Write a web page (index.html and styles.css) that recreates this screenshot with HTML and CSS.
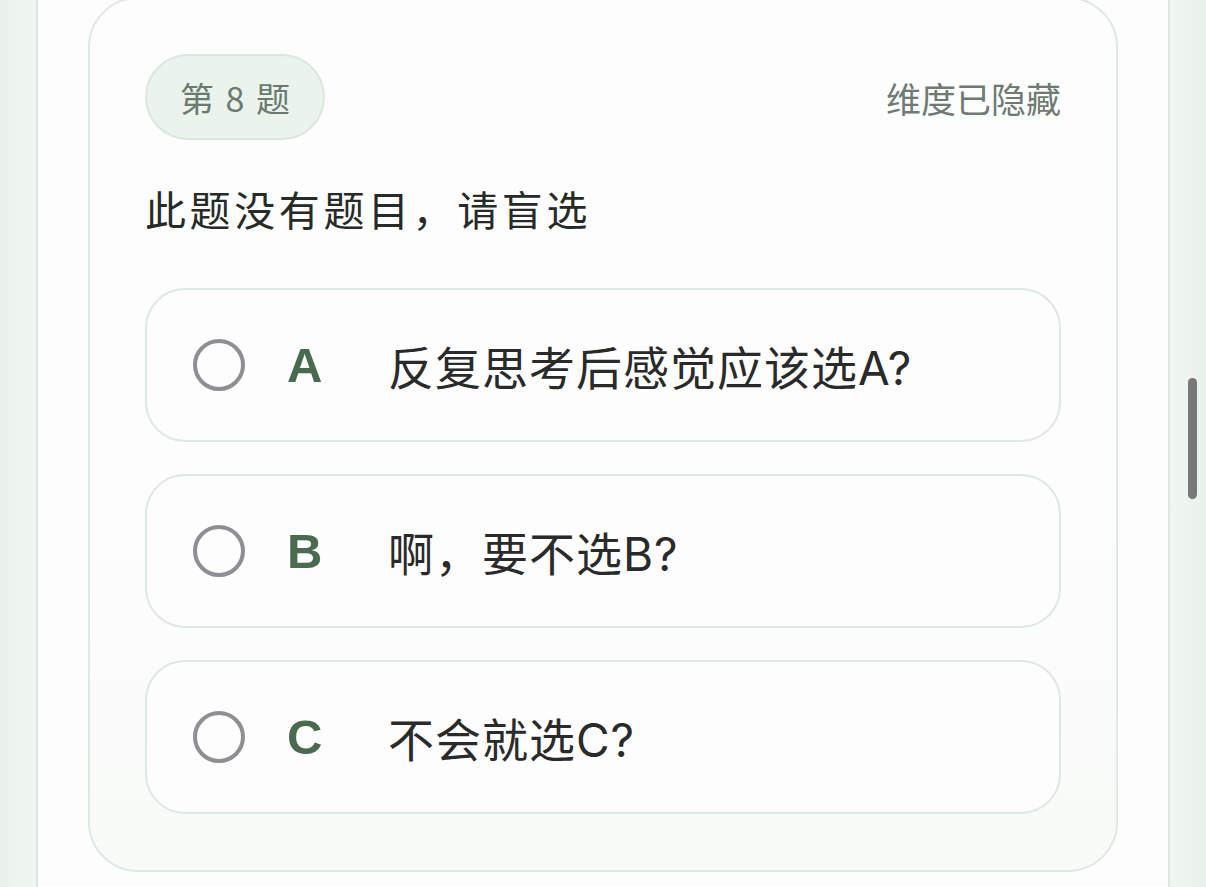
FILE: index.html
```html
<!DOCTYPE html>
<html lang="zh-CN">
<head>
<meta charset="utf-8">
<link rel="stylesheet" href="styles.css">
</head>
<body>
<div class="page">
  <div class="column">
    <div class="card">
      <div class="card-head">
        <span class="badge">第 8 题</span>
        <span class="hint">维度已隐藏</span>
      </div>
      <div class="question">此题没有题目，请盲选</div>
      <div class="options">
        <div class="option">
          <span class="radio"></span>
          <span class="letter">A</span>
          <span class="text">反复思考后感觉应该选A?</span>
        </div>
        <div class="option">
          <span class="radio"></span>
          <span class="letter">B</span>
          <span class="text">啊，要不选B?</span>
        </div>
        <div class="option">
          <span class="radio"></span>
          <span class="letter">C</span>
          <span class="text">不会就选C?</span>
        </div>
      </div>
    </div>
  </div>
  <div class="scrollbar"></div>
</div>
</body>
</html>
```
FILE: styles.css
```css
html, body {
  margin: 0;
  padding: 0;
  height: 100%;
}
body {
  background: linear-gradient(90deg, #eaf1ec 0%, #f1f6f2 3%, #f1f6f2 97%, #eaf1ec 100%);
  font-family: "Inter", "Noto Sans CJK SC", sans-serif;
  overflow: hidden;
}
.page {
  position: relative;
  height: 887px;
  display: flex;
  justify-content: center;
}
.column {
  width: 1134px;
  height: 100%;
  background: #fdfdfd;
  border-left: 2px solid #dce7df;
  border-right: 2px solid #dce7df;
  padding: 0 50px;
  box-sizing: border-box;
}
.card {
  margin-top: -3px;
  border: 2px solid #dfe8e2;
  border-radius: 50px;
  background: linear-gradient(180deg, #fdfdfd 0%, #fcfdfc 60%, #f8faf8 100%);
  padding: 55px 55px 56px;
}
.card-head {
  display: flex;
  justify-content: space-between;
  align-items: center;
}
.badge {
  box-sizing: border-box;
  height: 86px;
  padding: 0 31px 0 33px;
  display: flex;
  align-items: center;
  border-radius: 43px;
  background: #ebf3ed;
  border: 2px solid #dbe7de;
  color: #6a7a6f;
  font-size: 34px;
  letter-spacing: 2px;
  font-family: "Noto Sans CJK SC", sans-serif;
}
.hint {
  color: #6e7a72;
  font-size: 35px;
  font-family: "Noto Sans CJK SC", sans-serif;
}
.question {
  margin-top: 38px;
  font-size: 41px;
  line-height: 60px;
  letter-spacing: 3.6px;
  color: #262b28;
  font-family: "Noto Sans CJK SC", sans-serif;
}
.options {
  margin-top: 50px;
  display: flex;
  flex-direction: column;
  gap: 32px;
}
.option {
  box-sizing: border-box;
  height: 154px;
  border: 2px solid #dfe8e2;
  border-radius: 40px;
  background: #fdfdfd;
  display: flex;
  align-items: center;
  padding-left: 46px;
}
.radio {
  box-sizing: border-box;
  width: 52px;
  height: 52px;
  border-radius: 50%;
  border: 4px solid #8e8e93;
  flex: none;
}
.letter {
  width: 101px;
  margin-left: 42px;
  font-size: 49px;
  font-weight: 700;
  color: #4a6a50;
  font-family: "Liberation Sans", sans-serif;
}
.text {
  font-size: 46px;
  color: #2a2a2a;
  letter-spacing: 1px;
}
.scrollbar {
  position: absolute;
  right: 9px;
  top: 378px;
  width: 9px;
  height: 121px;
  border-radius: 5px;
  background: #787878;
}
```
